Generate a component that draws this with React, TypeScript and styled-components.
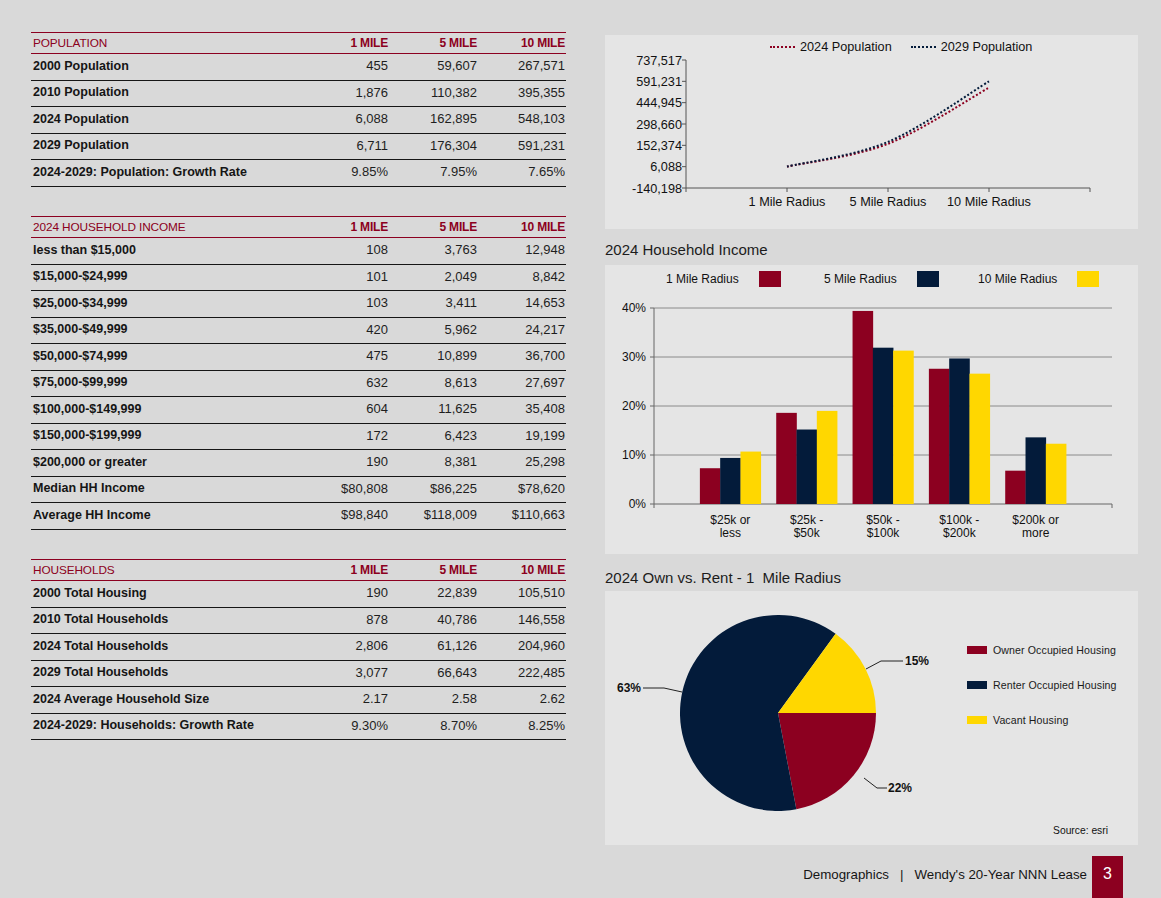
import React from 'react';
import styled, { createGlobalStyle } from 'styled-components';

const RED = '#8c0020';
const NAVY = '#031b3a';
const GOLD = '#ffd700';

const GlobalStyle = createGlobalStyle`
  html, body { margin: 0; padding: 0; background: #d9d9d9; }
  body { font-family: "Liberation Sans", Arial, sans-serif; }
`;

const Page = styled.div`
  width: 1161px;
  height: 898px;
  box-sizing: border-box;
  padding: 32px 23px 0 31px;
  display: flex;
  flex-direction: column;
  background: #d9d9d9;
  overflow: hidden;
  font-family: "Liberation Sans", Arial, sans-serif;
`;

const Main = styled.div`
  display: flex;
  gap: 39px;
  align-items: flex-start;
`;

const LeftCol = styled.div`
  width: 535px;
  display: flex;
  flex-direction: column;
  gap: 29.5px;
`;

const RightCol = styled.div`
  width: 533px;
  margin-top: 3px;
  display: flex;
  flex-direction: column;
`;

const Table = styled.section`
  display: flex;
  flex-direction: column;
`;

const HeadRow = styled.div`
  display: grid;
  grid-template-columns: 1fr 89px 89px 88px;
  height: 22px;
  box-sizing: border-box;
  border-top: 1px solid ${RED};
  border-bottom: 1px solid ${RED};
  align-items: center;
  padding: 0 1px 0 2px;
  color: ${RED};
`;

const HeadTitle = styled.div`
  font-size: 11.8px;
  letter-spacing: -0.1px;
`;

const HeadCol = styled.div`
  font-size: 12px;
  font-weight: bold;
  text-align: right;
  letter-spacing: -0.2px;
`;

const Row = styled.div`
  display: grid;
  grid-template-columns: 1fr 89px 89px 88px;
  height: 26.5px;
  box-sizing: border-box;
  border-bottom: 1px solid #161616;
  align-items: center;
  padding: 0 1px 2px 2px;
`;

const Label = styled.div`
  font-size: 12.5px;
  font-weight: bold;
  color: #151515;
  white-space: nowrap;
`;

const Num = styled.div`
  font-size: 13px;
  color: #1e1e1e;
  text-align: right;
`;

const Panel = styled.div<{ $h: number }>`
  height: ${(p) => p.$h}px;
  background: #e5e5e5;
  display: flex;
  flex-direction: column;
`;

const ChartTitle = styled.div<{ $top: number; $bottom: number }>`
  font-size: 15px;
  line-height: 18px;
  color: #1c1c1c;
  margin: ${(p) => p.$top}px 0 ${(p) => p.$bottom}px;
`;

const LineLegend = styled.div`
  height: 24px;
  flex: none;
  display: flex;
  align-items: center;
  padding-left: 165px;
  gap: 19px;
  font-size: 12.7px;
  color: #111;
`;

const LegendItem = styled.div<{ $gap: number }>`
  display: flex;
  align-items: center;
  gap: ${(p) => p.$gap}px;
`;

const DotLine = styled.span<{ $color: string }>`
  width: 25px;
  height: 0;
  border-top: 2px dotted ${(p) => p.$color};
`;

const BarLegend = styled.div`
  height: 28px;
  flex: none;
  display: grid;
  grid-template-columns: 158px 154px auto;
  align-items: center;
  padding-left: 61px;
  font-size: 12px;
  color: #111;
`;

const Swatch = styled.span<{ $color: string; $w: number; $h: number }>`
  width: ${(p) => p.$w}px;
  height: ${(p) => p.$h}px;
  background: ${(p) => p.$color};
  flex: none;
`;

const ChartSvg = styled.svg`
  display: block;
  overflow: visible;
  font-family: "Liberation Sans", Arial, sans-serif;
  flex: none;
`;

const PieRow = styled.div`
  display: flex;
  height: 100%;
`;

const PieSide = styled.div`
  flex: 1;
  min-width: 0;
  display: flex;
  flex-direction: column;
  padding: 52px 22px 9px 0;
`;

const PieLegendList = styled.div`
  display: flex;
  flex-direction: column;
  gap: 21px;
`;

const PieLegendItem = styled.div`
  display: flex;
  align-items: center;
  gap: 6px;
  height: 14px;
  font-size: 10.6px;
  letter-spacing: 0.1px;
  color: #1a1a1a;
  white-space: nowrap;
`;

const Source = styled.div`
  margin-top: auto;
  margin-right: 8px;
  align-self: flex-end;
  font-size: 10.3px;
  color: #111;
`;

const Footer = styled.footer`
  margin-top: auto;
  margin-right: 15px;
  height: 42px;
  display: flex;
  justify-content: flex-end;
  align-items: stretch;
`;

const FooterText = styled.div`
  align-self: center;
  padding-bottom: 6px;
  margin-right: 5px;
  font-size: 13.3px;
  color: #151515;
`;

const Sep = styled.span`
  margin: 0 11px;
`;

const PageNum = styled.div`
  width: 31px;
  background: ${RED};
  color: #fff;
  font-size: 16px;
  display: flex;
  justify-content: center;
  align-items: center;
  padding-bottom: 6px;
  box-sizing: border-box;
`;

type TRow = [string, string, string, string];

const population: TRow[] = [
  ['2000 Population', '455', '59,607', '267,571'],
  ['2010 Population', '1,876', '110,382', '395,355'],
  ['2024 Population', '6,088', '162,895', '548,103'],
  ['2029 Population', '6,711', '176,304', '591,231'],
  ['2024-2029: Population: Growth Rate', '9.85%', '7.95%', '7.65%'],
];

const income: TRow[] = [
  ['less than $15,000', '108', '3,763', '12,948'],
  ['$15,000-$24,999', '101', '2,049', '8,842'],
  ['$25,000-$34,999', '103', '3,411', '14,653'],
  ['$35,000-$49,999', '420', '5,962', '24,217'],
  ['$50,000-$74,999', '475', '10,899', '36,700'],
  ['$75,000-$99,999', '632', '8,613', '27,697'],
  ['$100,000-$149,999', '604', '11,625', '35,408'],
  ['$150,000-$199,999', '172', '6,423', '19,199'],
  ['$200,000 or greater', '190', '8,381', '25,298'],
  ['Median HH Income', '$80,808', '$86,225', '$78,620'],
  ['Average HH Income', '$98,840', '$118,009', '$110,663'],
];

const households: TRow[] = [
  ['2000 Total Housing', '190', '22,839', '105,510'],
  ['2010 Total Households', '878', '40,786', '146,558'],
  ['2024 Total Households', '2,806', '61,126', '204,960'],
  ['2029 Total Households', '3,077', '66,643', '222,485'],
  ['2024 Average Household Size', '2.17', '2.58', '2.62'],
  ['2024-2029: Households: Growth Rate', '9.30%', '8.70%', '8.25%'],
];

const DataTable = ({ title, rows }: { title: string; rows: TRow[] }) => (
  <Table>
    <HeadRow>
      <HeadTitle>{title}</HeadTitle>
      <HeadCol>1 MILE</HeadCol>
      <HeadCol>5 MILE</HeadCol>
      <HeadCol>10 MILE</HeadCol>
    </HeadRow>
    {rows.map((r) => (
      <Row key={r[0]}>
        <Label>{r[0]}</Label>
        <Num>{r[1]}</Num>
        <Num>{r[2]}</Num>
        <Num>{r[3]}</Num>
      </Row>
    ))}
  </Table>
);

/* ---------- line chart ---------- */
const yLabels = ['737,517', '591,231', '444,945', '298,660', '152,374', '6,088', '-140,198'];
const L_TOP = 1;
const L_BOT = 129;
const L_X0 = 81;
const L_X1 = 485;
const lx = (i: number) => L_X0 + ((L_X1 - L_X0) / 4) * (i + 1);
const ly = (v: number) => L_BOT - ((v + 140198) / 877715) * (L_BOT - L_TOP);

function smooth(pts: [number, number][]) {
  let d = `M${pts[0][0]},${pts[0][1]}`;
  for (let i = 0; i < pts.length - 1; i++) {
    const p0 = pts[i - 1] || pts[i];
    const p1 = pts[i];
    const p2 = pts[i + 1];
    const p3 = pts[i + 2] || p2;
    const t = 1 / 6;
    const c1 = [p1[0] + (p2[0] - p0[0]) * t, p1[1] + (p2[1] - p0[1]) * t];
    const c2 = [p2[0] - (p3[0] - p1[0]) * t, p2[1] - (p3[1] - p1[1]) * t];
    d += ` C${c1[0]},${c1[1]} ${c2[0]},${c2[1]} ${p2[0]},${p2[1]}`;
  }
  return d;
}

const LineChart = () => {
  const s2024: [number, number][] = [6088, 162895, 548103].map((v, i) => [lx(i), ly(v)]);
  const s2029: [number, number][] = [6711, 176304, 591231].map((v, i) => [lx(i), ly(v)]);
  const step = (L_BOT - L_TOP) / 6;
  return (
    <ChartSvg width={533} height={170}>
      <line x1={L_X0} y1={L_TOP} x2={L_X0} y2={L_BOT} stroke="#555" strokeWidth={1} />
      <line x1={L_X0} y1={L_BOT} x2={L_X1} y2={L_BOT} stroke="#555" strokeWidth={1} />
      {yLabels.map((t, i) => (
        <g key={t}>
          <line x1={L_X0 - 4} x2={L_X0} y1={L_TOP + step * i} y2={L_TOP + step * i} stroke="#555" />
          <text x={77} y={L_TOP + step * i} dy="0.36em" textAnchor="end" fontSize={12.7} fill="#111">
            {t}
          </text>
        </g>
      ))}
      {[0, 1, 2, 3, 4].map((i) => {
        const x = L_X0 + ((L_X1 - L_X0) / 4) * i;
        return <line key={i} x1={x} x2={x} y1={L_BOT} y2={L_BOT + 4} stroke="#555" />;
      })}
      {['1 Mile Radius', '5 Mile Radius', '10 Mile Radius'].map((t, i) => (
        <text key={t} x={lx(i)} y={142} dy="0.36em" textAnchor="middle" fontSize={12.7} fill="#111">
          {t}
        </text>
      ))}
      <path d={smooth(s2024)} fill="none" stroke={RED} strokeWidth={2} strokeDasharray="2 2" />
      <path d={smooth(s2029)} fill="none" stroke={NAVY} strokeWidth={2} strokeDasharray="2 2" />
    </ChartSvg>
  );
};

/* ---------- bar chart ---------- */
const barData = [
  { l: ['$25k or', 'less'], v: [7.3, 9.4, 10.7] },
  { l: ['$25k -', '$50k'], v: [18.6, 15.2, 19.0] },
  { l: ['$50k -', '$100k'], v: [39.4, 31.9, 31.3] },
  { l: ['$100k -', '$200k'], v: [27.6, 29.7, 26.6] },
  { l: ['$200k or', 'more'], v: [6.8, 13.6, 12.3] },
];
const B_X0 = 49;
const B_X1 = 507;
const B_TOP = 15;
const B_BOT = 211;
const bColors = [RED, NAVY, GOLD];

const BarChart = () => {
  const slot = (B_X1 - B_X0) / 6;
  const pct = (B_BOT - B_TOP) / 40;
  const bw = 20.3;
  return (
    <ChartSvg width={533} height={261}>
      {[40, 30, 20, 10, 0].map((p) => {
        const y = B_BOT - p * pct;
        return (
          <g key={p}>
            <line x1={B_X0} x2={B_X1} y1={y} y2={y} stroke={p === 0 ? '#666' : '#8a8a8a'} />
            <line x1={B_X0 - 4} x2={B_X0} y1={y} y2={y} stroke="#666" />
            <text x={41} y={y} dy="0.36em" textAnchor="end" fontSize={12} fill="#111">
              {p}%
            </text>
          </g>
        );
      })}
      <line x1={B_X0} x2={B_X0} y1={B_TOP} y2={B_BOT} stroke="#666" />
      <line x1={B_X0} x2={B_X0} y1={B_BOT} y2={B_BOT + 4} stroke="#666" />
      <line x1={B_X1} x2={B_X1} y1={B_BOT} y2={B_BOT + 4} stroke="#666" />
      {barData.map((g, gi) => {
        const cx = B_X0 + slot * (gi + 1);
        return (
          <g key={gi}>
            {g.v.map((v, vi) => (
              <rect
                key={vi}
                x={cx - bw * 1.5 + bw * vi}
                y={B_BOT - v * pct}
                width={bw + 0.3}
                height={v * pct}
                fill={bColors[vi]}
              />
            ))}
            {g.l.map((t, li) => (
              <text key={t} x={cx} y={227 + li * 13} dy="0.36em" textAnchor="middle" fontSize={12} fill="#111">
                {t}
              </text>
            ))}
          </g>
        );
      })}
    </ChartSvg>
  );
};

/* ---------- pie chart ---------- */
const PCX = 173;
const PCY = 122;
const PR = 98;

function arc(a0: number, a1: number) {
  const rad = (a: number) => (a * Math.PI) / 180;
  const x0 = PCX + PR * Math.cos(rad(a0));
  const y0 = PCY + PR * Math.sin(rad(a0));
  const x1 = PCX + PR * Math.cos(rad(a1));
  const y1 = PCY + PR * Math.sin(rad(a1));
  const large = a1 - a0 > 180 ? 1 : 0;
  return `M${PCX},${PCY} L${x0},${y0} A${PR},${PR} 0 ${large} 1 ${x1},${y1} Z`;
}

const PieChart = () => {
  const owner = 22 * 3.6;
  const vacant = 15 * 3.6;
  return (
    <ChartSvg width={362} height={254}>
      <path d={arc(0, owner)} fill={RED} />
      <path d={arc(owner, 360 - vacant)} fill={NAVY} />
      <path d={arc(360 - vacant, 360)} fill={GOLD} />
      <polyline points="261,78 276,70 298,70" fill="none" stroke="#222" strokeWidth={1} />
      <text x={300} y={70} dy="0.36em" fontSize={12} fontWeight="bold" fill="#111">
        15%
      </text>
      <polyline points="38,97 59,97 77,101" fill="none" stroke="#222" strokeWidth={1} />
      <text x={36} y={97} dy="0.36em" textAnchor="end" fontSize={12} fontWeight="bold" fill="#111">
        63%
      </text>
      <polyline points="259,187 272,197 282,197" fill="none" stroke="#222" strokeWidth={1} />
      <text x={283} y={197} dy="0.36em" fontSize={12} fontWeight="bold" fill="#111">
        22%
      </text>
    </ChartSvg>
  );
};

export default function App() {
  return (
    <Page>
      <GlobalStyle />
      <Main>
        <LeftCol>
          <DataTable title="POPULATION" rows={population} />
          <DataTable title="2024 HOUSEHOLD INCOME" rows={income} />
          <DataTable title="HOUSEHOLDS" rows={households} />
        </LeftCol>
        <RightCol>
          <Panel $h={194}>
            <LineLegend>
              <LegendItem $gap={5}>
                <DotLine $color={RED} />
                2024 Population
              </LegendItem>
              <LegendItem $gap={5}>
                <DotLine $color={NAVY} />
                2029 Population
              </LegendItem>
            </LineLegend>
            <LineChart />
          </Panel>
          <ChartTitle $top={12} $bottom={6}>2024 Household Income</ChartTitle>
          <Panel $h={289}>
            <BarLegend>
              <LegendItem $gap={20}>
                1 Mile Radius
                <Swatch $color={RED} $w={22} $h={16} />
              </LegendItem>
              <LegendItem $gap={20}>
                5 Mile Radius
                <Swatch $color={NAVY} $w={22} $h={16} />
              </LegendItem>
              <LegendItem $gap={20}>
                10 Mile Radius
                <Swatch $color={GOLD} $w={22} $h={16} />
              </LegendItem>
            </BarLegend>
            <BarChart />
          </Panel>
          <ChartTitle $top={15} $bottom={4}>2024 Own vs. Rent - 1&nbsp; Mile Radius</ChartTitle>
          <Panel $h={254}>
            <PieRow>
              <PieChart />
              <PieSide>
                <PieLegendList>
                  <PieLegendItem>
                    <Swatch $color={RED} $w={20} $h={8} />
                    Owner Occupied Housing
                  </PieLegendItem>
                  <PieLegendItem>
                    <Swatch $color={NAVY} $w={20} $h={8} />
                    Renter Occupied Housing
                  </PieLegendItem>
                  <PieLegendItem>
                    <Swatch $color={GOLD} $w={20} $h={8} />
                    Vacant Housing
                  </PieLegendItem>
                </PieLegendList>
                <Source>Source: esri</Source>
              </PieSide>
            </PieRow>
          </Panel>
        </RightCol>
      </Main>
      <Footer>
        <FooterText>
          Demographics<Sep>|</Sep>Wendy&apos;s 20-Year NNN Lease
        </FooterText>
        <PageNum>3</PageNum>
      </Footer>
    </Page>
  );
}
